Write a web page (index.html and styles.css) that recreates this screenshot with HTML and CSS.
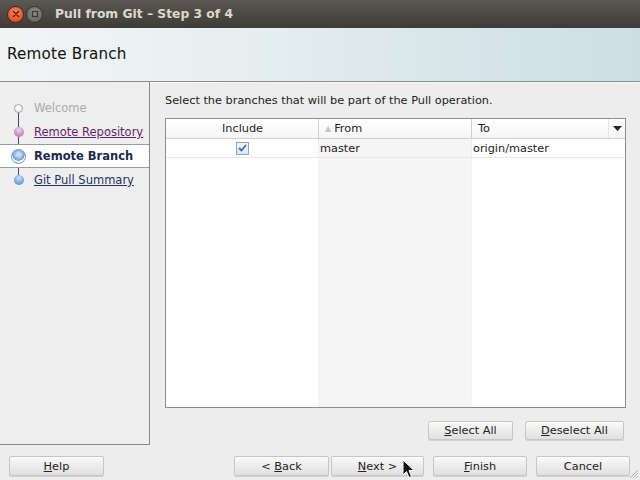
FILE: index.html
```html
<!DOCTYPE html>
<html>
<head>
<meta charset="utf-8">
<link rel="stylesheet" href="styles.css">
</head>
<body>
<div class="window">
  <div class="titlebar">
    <span class="wbtn close"><svg width="10" height="10" viewBox="0 0 10 10"><path d="M2.5 2.5 L7.5 7.5 M7.5 2.5 L2.5 7.5" stroke="#5a1a08" stroke-width="1.4" stroke-linecap="round"/></svg></span>
    <span class="wbtn max"><svg width="10" height="10" viewBox="0 0 10 10"><rect x="2.5" y="2.5" width="5" height="5" fill="none" stroke="#3a3936" stroke-width="1.2"/></svg></span>
    <span class="title">Pull from Git – Step 3 of 4</span>
  </div>
  <div class="header"><span class="header-title">Remote Branch</span></div>
  <div class="main">
    <div class="steps">
      <ul class="steplist">
        <li class="step disabled"><span class="mark"><span class="dot dot-white"></span></span><span class="label">Welcome</span></li>
        <li class="step"><span class="mark"><span class="dot dot-purple"></span></span><span class="label link visited">Remote Repository</span></li>
        <li class="step current"><span class="mark"><span class="dot dot-current"></span></span><span class="label">Remote Branch</span></li>
        <li class="step"><span class="mark"><span class="dot dot-blue"></span></span><span class="label link">Git Pull Summary</span></li>
      </ul>
    </div>
    <div class="content">
      <div class="intro">Select the branches that will be part of the Pull operation.</div>
      <div class="table">
        <div class="thead">
          <div class="th th-center">Include</div>
          <div class="th"><span class="sort">▲</span>From</div>
          <div class="th th-last">To<span class="menu"><svg width="9" height="6" viewBox="0 0 9 6"><path d="M0 0 H9 L4.5 5 Z" fill="#222"/></svg></span></div>
        </div>
        <div class="tbody">
          <div class="row">
            <div class="td td-center"><span class="check"><svg width="9" height="8" viewBox="0 0 9 8"><path d="M1 4 L3.5 6.5 L8 1" fill="none" stroke="#3d6fb5" stroke-width="1.8"/></svg></span></div>
            <div class="td td-sorted">master</div>
            <div class="td">origin/master</div>
          </div>
          <div class="filler">
            <div class="fcol"></div>
            <div class="fcol td-sorted"></div>
            <div class="fcol"></div>
          </div>
        </div>
      </div>
      <div class="table-actions">
        <button class="btn btn-sel"><span><u>S</u>elect All</span></button>
        <button class="btn btn-desel"><span><u>D</u>eselect All</span></button>
      </div>
    </div>
  </div>
  <div class="footer">
    <button class="btn btn-help"><span><u>H</u>elp</span></button>
    <div class="nav">
      <button class="btn btn-back"><span>&lt; <u>B</u>ack</span></button>
      <button class="btn btn-next"><span><u>N</u>ext &gt;</span></button>
      <button class="btn btn-finish"><span><u>F</u>inish</span></button>
      <button class="btn btn-cancel"><span>Cancel</span></button>
    </div>
  </div>
  <svg class="cursor" width="14" height="20" viewBox="0 0 14 20"><path d="M1 1 L1 16 L4.5 12.5 L7 18.5 L9.5 17.5 L7 11.5 L12 11.5 Z" fill="#111" stroke="#fff" stroke-width="1"/></svg>
  <svg class="grip" width="12" height="12" viewBox="0 0 12 12"><path d="M11 3 L3 11 M11 6 L6 11 M11 9 L9 11" stroke="#b0b0b0" stroke-width="1"/></svg>
</div>
</body>
</html>
```

FILE: styles.css
```css
* { box-sizing: border-box; }
html, body { margin: 0; padding: 0; }
body {
  width: 640px;
  height: 480px;
  overflow: hidden;
  font-family: "DejaVu Sans", "Liberation Sans", sans-serif;
  font-size: 11.3px;
  color: #222;
  background: #ededed;
}
.window {
  position: relative;
  width: 640px;
  height: 480px;
  display: flex;
  flex-direction: column;
  background: #ededed;
}
.titlebar {
  height: 28px;
  flex: none;
  display: flex;
  align-items: center;
  padding-left: 7px;
  background: linear-gradient(#5b5952, #48473f 60%, #3d3c37);
}
.wbtn {
  width: 17px;
  height: 17px;
  border-radius: 50%;
  display: flex;
  align-items: center;
  justify-content: center;
  margin-right: 2px;
}
.close {
  background: radial-gradient(circle at 50% 35%, #f7875c, #e5532a 70%, #b63d1c);
  border: 1px solid #3a2a22;
}
.max {
  background: radial-gradient(circle at 50% 35%, #8d8b84, #6c6a63 70%, #55534d);
  border: 1px solid #33322e;
}
.title {
  margin-left: 10px;
  font-family: "DejaVu Sans", sans-serif;
  font-weight: bold;
  font-size: 12.3px;
  color: #dcd8cf;
}
.header {
  height: 54px;
  flex: none;
  display: flex;
  align-items: center;
  padding-left: 7px;
  background: linear-gradient(90deg, #f3f5f5 0%, #e6eef0 40%, #d8e6ea 70%, #cddee4 100%);
  border-bottom: 1px solid #8c8c8c;
  box-shadow: 0 1px 0 #f8f8f8;
}
.header-title {
  font-size: 15.2px;
  color: #111;
  letter-spacing: 0.2px;
  margin-top: -1px;
}
.main {
  height: 363px;
  flex: none;
  display: flex;
}
.steps {
  width: 150px;
  flex: none;
  border-right: 1px solid #8a8a8a;
  border-bottom: 1px solid #8a8a8a;
  background: #eeeeee;
  padding-top: 14px;
}
.steplist {
  list-style: none;
  margin: 0;
  padding: 0;
  position: relative;
}
.steplist::before {
  content: "";
  position: absolute;
  left: 18px;
  top: 14px;
  height: 71px;
  width: 1px;
  background: #4a4a55;
}
.step {
  height: 24px;
  display: flex;
  align-items: center;
  position: relative;
}
.step.current {
  background: #fff;
  border-top: 1px solid #9a9a9a;
  border-bottom: 1px solid #9a9a9a;
}
.mark {
  width: 34px;
  flex: none;
  display: flex;
  justify-content: center;
  padding-left: 3px;
}
.dot {
  display: block;
  border-radius: 50%;
  position: relative;
  z-index: 1;
}
.dot-white {
  width: 9px; height: 9px;
  background: radial-gradient(circle at 50% 35%, #fff, #e6e6e6);
  border: 1px solid #a8a8a8;
}
.dot-purple {
  width: 10px; height: 10px;
  background: radial-gradient(circle at 50% 30%, #ead7ea, #b88ab8 70%, #9a6a9a);
}
.dot-blue {
  width: 10px; height: 10px;
  background: radial-gradient(circle at 50% 30%, #cfe0f6, #6e9bd6 70%, #4a78b8);
}
.dot-current {
  width: 15px; height: 15px;
  background: radial-gradient(circle at 50% 35%, #dceaf9, #8fb4e4 45%, #5b89c9 55%, #fff 60%, #fff 75%, #8aa6c8 80%);
  border: 1px solid #7c96ba;
}
.label {
  font-size: 11.5px;
  white-space: nowrap;
}
.disabled .label { color: #aaaaaa; }
.link { text-decoration: underline; color: #1f3466; }
.link.visited { color: #6a1f6e; }
.current .label { font-weight: bold; color: #1b2a4c; }
.content {
  flex: 1;
  display: flex;
  flex-direction: column;
  padding: 10px 14px 0 15px;
}
.intro {
  height: 26px;
  line-height: 18px;
  color: #222;
}
.table {
  height: 290px;
  border: 1px solid #8c8c8c;
  background: #fff;
  display: flex;
  flex-direction: column;
}
.thead {
  height: 20px;
  flex: none;
  display: grid;
  grid-template-columns: 153px 153px 1fr;
  background: linear-gradient(#ffffff, #f6f6f6);
  border-bottom: 1px solid #cfcfcf;
}
.th {
  display: flex;
  align-items: center;
  padding-left: 1px;
  border-right: 1px solid #cfcfcf;
  color: #222;
}
.th-center { justify-content: center; }
.th-last { border-right: none; padding-left: 6px; position: relative; }
.sort { color: #c4c4c4; font-size: 8px; margin: 0 3px 0 5px; }
.menu {
  margin-left: auto;
  width: 17px;
  height: 19px;
  display: flex;
  align-items: center;
  justify-content: center;
  border-left: 1px solid #e6e6e6;
}
.tbody {
  flex: 1;
  display: flex;
  flex-direction: column;
}
.row {
  height: 19px;
  display: grid;
  grid-template-columns: 153px 153px 1fr;
  border-bottom: 1px solid #e8e8e8;
}
.td {
  display: flex;
  align-items: center;
  padding-left: 1px;
  border-right: 1px solid #ececec;
}
.td:last-child { border-right: none; }
.td-center { justify-content: center; }
.td-sorted { background: #f5f5f5; }
.filler {
  flex: 1;
  display: grid;
  grid-template-columns: 153px 153px 1fr;
}
.fcol { border-right: 1px solid #f2f2f2; }
.fcol:last-child { border-right: none; }
.check {
  width: 13px;
  height: 13px;
  border: 1px solid #8aa6c9;
  background: linear-gradient(#f4f8fc, #dbe6f2);
  display: flex;
  align-items: center;
  justify-content: center;
}
.table-actions {
  display: flex;
  justify-content: flex-end;
  gap: 12px;
  padding-top: 13px;
  padding-right: 2px;
}
.btn {
  font-family: "DejaVu Sans", "Liberation Sans", sans-serif;
  font-size: 11.3px;
  color: #222;
  height: 19px;
  padding: 0;
  border: 1px solid #c6c6c6;
  border-radius: 2px;
  background: linear-gradient(#fbfbfb, #ececec 50%, #e0e0e0);
  box-shadow: 0 1px 0 #d2d2d2;
  display: flex;
  align-items: center;
  justify-content: center;
  white-space: pre;
}
.btn u { text-decoration: underline; }
.btn-sel { width: 85px; }
.btn-desel { width: 99px; }
.footer {
  flex: 1;
  display: flex;
  align-items: flex-start;
  padding: 11px 10px 0 9px;
}
.btn-help, .btn-back, .btn-next, .btn-finish, .btn-cancel { height: 20px; }
.btn-help { width: 95px; }
.nav {
  margin-left: auto;
  display: flex;
}
.btn-back { width: 95px; }
.btn-next { width: 93px; margin-left: 2px; }
.btn-finish { width: 94px; margin-left: 9px; }
.btn-cancel { width: 94px; margin-left: 9px; }
.cursor {
  position: absolute;
  left: 402px;
  top: 459px;
}
.grip {
  position: absolute;
  right: 1px;
  bottom: 1px;
}
```
